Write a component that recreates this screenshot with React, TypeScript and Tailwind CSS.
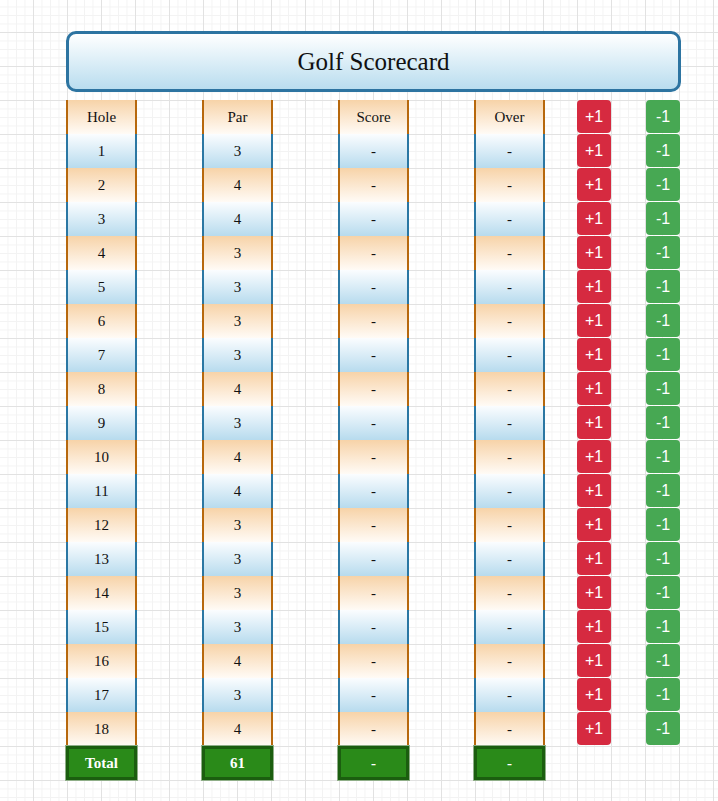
import React from "react";

const pars = [3, 4, 4, 3, 3, 3, 3, 4, 3, 4, 4, 3, 3, 3, 3, 4, 3, 4];

function Cell({ orange, children }: { orange: boolean; children: React.ReactNode }) {
  return (
    <div
      className={
        orange
          ? "h-[34px] pt-[1px] flex items-center justify-center border-x-2 border-[#b7680d] bg-gradient-to-b from-[#f7d3a8] to-[#fffbf6] text-[15px] text-[#111]"
          : "h-[34px] pt-[1px] flex items-center justify-center border-x-2 border-[#2b77a3] bg-gradient-to-b from-[#fbfdff] to-[#b7dbee] text-[15px] text-[#111]"
      }
    >
      {children}
    </div>
  );
}

function TotalCell({ children }: { children: React.ReactNode }) {
  return (
    <div className="h-[34px] pt-[1px] flex items-center justify-center bg-[#2a8a19] border-[3px] border-[#1b5e0f] shadow-[0_0_0_1px_#8fae88] text-white font-bold text-[15px]">
      {children}
    </div>
  );
}

function Column({ header, values, total, className }: { header: string; values: (string | number)[]; total: string; className: string }) {
  return (
    <div className={"flex flex-col w-[71px] " + className}>
      <Cell orange={true}>{header}</Cell>
      {values.map((v, i) => (
        <Cell key={i} orange={i % 2 === 1}>
          {v}
        </Cell>
      ))}
      <TotalCell>{total}</TotalCell>
    </div>
  );
}

function ButtonColumn({ label, red, className }: { label: string; red: boolean; className: string }) {
  return (
    <div className={"flex flex-col w-[34px] " + className}>
      {Array.from({ length: 19 }).map((_, i) => (
        <div key={i} className="h-[34px]">
          <div
            className={
              (red ? "bg-[#d62a40]" : "bg-[#47a853]") +
              " h-[33px] rounded-[4px] flex items-center justify-center text-white text-[16px] font-['Liberation_Sans',Arial,sans-serif]"
            }
          >
            {label}
          </div>
        </div>
      ))}
    </div>
  );
}

export default function App() {
  const dashes = pars.map(() => "-");
  return (
    <div className="min-h-[801px] w-full bg-white [background-image:linear-gradient(to_right,#e2e2e2_1px,transparent_1px),linear-gradient(to_bottom,#e2e2e2_1px,transparent_1px),linear-gradient(to_right,#f3f3f3_1px,transparent_1px),linear-gradient(to_bottom,#f3f3f3_1px,transparent_1px)] [background-size:34px_34px,34px_34px,8.5px_8.5px,8.5px_8.5px] [background-position:-1px_-2px,-1px_-2px,-1px_-2px,-1px_-2px] pt-[31px] pl-[66px] font-['Liberation_Serif',serif]">
      <div className="w-[615px] h-[61px] rounded-[10px] border-[3px] border-[#2d74a1] bg-gradient-to-b from-[#ffffff] to-[#b9ddef] flex items-center justify-center text-[25px] text-[#111] font-['Liberation_Serif',serif]">
        Golf Scorecard
      </div>
      <div className="flex mt-[8px]">
        <Column header="Hole" values={pars.map((_, i) => i + 1)} total="Total" className="" />
        <Column header="Par" values={pars} total="61" className="ml-[65px]" />
        <Column header="Score" values={dashes} total="-" className="ml-[65px]" />
        <Column header="Over" values={dashes} total="-" className="ml-[65px]" />
        <ButtonColumn label="+1" red={true} className="ml-[32px]" />
        <ButtonColumn label="-1" red={false} className="ml-[35px]" />
      </div>
    </div>
  );
}
